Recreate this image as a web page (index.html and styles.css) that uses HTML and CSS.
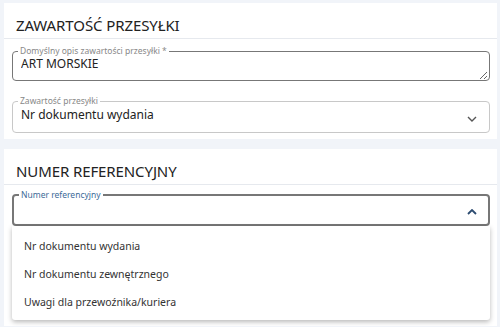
FILE: index.html
```html
<!DOCTYPE html>
<html lang="pl">
<head>
    <meta charset="UTF-8">
    <title>Przesyłka</title>
    <link rel="stylesheet" href="styles.css">
</head>
<body>
    <section class="card">
        <h2 class="card-title">ZAWARTOŚĆ PRZESYŁKI</h2>
        <div class="card-body">
            <fieldset class="field">
                <legend>Domyślny opis zawartości przesyłki *</legend>
                <textarea class="field-area">ART MORSKIE</textarea>
            </fieldset>
            <fieldset class="field field-select">
                <legend>Zawartość przesyłki</legend>
                <div class="field-value">Nr dokumentu wydania</div>
                <svg class="chevron" width="10" height="6" viewBox="0 0 10 6">
                    <path d="M1 1l4 4 4-4" fill="none" stroke="#555" stroke-width="1.4"/>
                </svg>
            </fieldset>
        </div>
    </section>

    <section class="card card-last">
        <h2 class="card-title">NUMER REFERENCYJNY</h2>
        <div class="card-body">
            <div class="dropdown">
                <fieldset class="field field-select field-active">
                    <legend>Numer referencyjny</legend>
                    <div class="field-value"></div>
                    <svg class="chevron" width="10" height="6" viewBox="0 0 10 6">
                        <path d="M1 5l4-4 4 4" fill="none" stroke="#2c4b70" stroke-width="1.8"/>
                    </svg>
                </fieldset>
                <ul class="menu">
                    <li>Nr dokumentu wydania</li>
                    <li>Nr dokumentu zewnętrznego</li>
                    <li>Uwagi dla przewoźnika/kuriera</li>
                </ul>
            </div>
        </div>
    </section>
</body>
</html>
```

FILE: styles.css
```css
body {
    margin: 0;
    padding-top: 3px;
    background-color: #f1f4f9;
    font-family: "Noto Sans", Arial, sans-serif;
    color: #222;
}

.card {
    background-color: white;
    margin: 0 3px 10px 4px;
}

.card-last {
    margin-bottom: 0;
}

.card-title {
    margin: 0;
    height: 36px;
    padding: 0 12px;
    box-sizing: border-box;
    line-height: 44px;
    font-size: 15px;
    font-weight: normal;
    letter-spacing: -0.1px;
    color: #222;
    border-bottom: 1px solid #e6e9ee;
}

.card-body {
    padding: 7px 7px 6px 8px;
}

.card-last .card-body {
    padding: 5px 7px 4px 8px;
}

.field {
    margin: 0;
    padding: 0 8px;
    border: 1px solid #c8c8c8;
    border-radius: 4px;
    position: relative;
}

.field + .field {
    margin-top: 15px;
}

.field legend {
    padding: 0 2px;
    margin-left: -3px;
    font-size: 8.5px;
    line-height: 10px;
    color: #888;
}

.field-area {
    display: block;
    width: 100%;
    height: 23px;
    margin: 0;
    padding: 1px 0 0;
    border: none;
    outline: none;
    font-family: inherit;
    font-size: 12px;
    line-height: 14px;
    color: #222;
    background: transparent;
}

.field:first-child {
    border-color: #777;
    padding-right: 1px;
}

.field-value {
    height: 26px;
    line-height: 18px;
    font-size: 12px;
    padding-right: 30px;
}

.chevron {
    position: absolute;
    right: 12px;
    top: 10px;
}

.field-active {
    border: 2px solid #3a5f88;
    padding: 0 7px;
}

.field-active legend {
    color: #3d6a98;
    margin-left: -2px;
}

.field-active .field-value {
    height: 24px;
}

.field-active .chevron {
    right: 11px;
    top: 9px;
}

.dropdown {
    position: relative;
    height: 132px;
}

.menu {
    position: absolute;
    left: 0;
    right: 0;
    top: 36px;
    margin: 0;
    padding: 6px 0 4px;
    list-style: none;
    background-color: white;
    box-shadow: 0 2px 5px rgba(0, 0, 0, 0.28);
    border-radius: 0 0 3px 3px;
}

.menu li {
    height: 28px;
    line-height: 28px;
    padding-left: 12px;
    font-size: 10.5px;
    color: #333;
}
```
